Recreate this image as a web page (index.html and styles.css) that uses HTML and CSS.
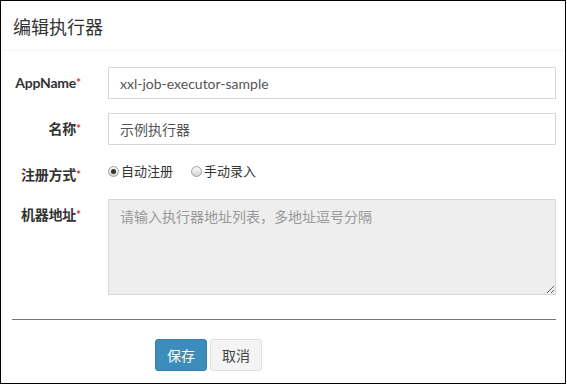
FILE: index.html
```html
<!DOCTYPE html>
<html lang="zh-CN">
<head>
  <meta charset="UTF-8" />
  <title>编辑执行器</title>
  <link rel="stylesheet" href="styles.css">
</head>
<body>
  <div class="modal">
    <div class="modal-header">
      <h4 class="modal-title">编辑执行器</h4>
    </div>
    <form class="modal-body">
      <div class="form-group">
        <label class="control-label">AppName<span class="req">*</span></label>
        <input class="form-control" type="text" value="xxl-job-executor-sample" />
      </div>
      <div class="form-group">
        <label class="control-label">名称<span class="req">*</span></label>
        <input class="form-control" type="text" value="示例执行器" />
      </div>
      <div class="form-group">
        <label class="control-label">注册方式<span class="req">*</span></label>
        <div class="radios">
          <label class="radio-inline"><input type="radio" name="addressType" checked />自动注册</label>
          <label class="radio-inline"><input type="radio" name="addressType" />手动录入</label>
        </div>
      </div>
      <div class="form-group">
        <label class="control-label">机器地址<span class="req">*</span></label>
        <textarea class="form-control area" readonly placeholder="请输入执行器地址列表，多地址逗号分隔"></textarea>
      </div>
      <hr />
      <div class="actions">
        <button type="button" class="btn btn-primary">保存</button>
        <button type="button" class="btn btn-default">取消</button>
      </div>
    </form>
  </div>
</body>
</html>
```

FILE: styles.css
```css
body {
  margin: 0;
  font-family: Lato, "Noto Sans CJK SC", sans-serif;
  font-size: 14px;
  color: #333;
  background: #fff;
}

.modal {
  box-sizing: border-box;
  width: 566px;
  height: 384px;
  border: 1px solid #000;
  background: #fff;
}

.modal-header {
  height: 49px;
  border-bottom: 1px solid #f4f4f4;
  padding-left: 12px;
  display: flex;
  align-items: center;
}

.modal-title {
  margin: 0;
  font-size: 18px;
  font-weight: normal;
  color: #333;
}

.modal-body {
  padding: 16px 9px 0 11px;
}

.form-group {
  display: grid;
  grid-template-columns: 69px 1fr;
  column-gap: 27px;
  align-items: start;
  margin-bottom: 14px;
}

.control-label {
  text-align: right;
  font-weight: bold;
  padding-top: 6px;
  line-height: 20px;
  white-space: nowrap;
  letter-spacing: -0.2px;
}

.req {
  color: #e0302a;
  font-size: 12px;
  font-weight: bold;
  vertical-align: top;
}

.form-control {
  box-sizing: border-box;
  width: 100%;
  height: 32px;
  padding: 6px 11px;
  border: 1px solid #d2d6de;
  font: inherit;
  color: #555;
  outline: none;
}

.area {
  height: 96px;
  background: #eee;
  resize: vertical;
}

.area::placeholder {
  color: #999;
}

.radios {
  display: flex;
  gap: 18px;
  padding-top: 2px;
  line-height: 20px;
  font-size: 13px;
}

.radio-inline {
  display: flex;
  align-items: center;
  gap: 2px;
  color: #333;
}

.radio-inline input {
  appearance: none;
  width: 11px;
  height: 11px;
  margin: 0;
  border: 1px solid #a0a0a0;
  border-radius: 50%;
  background: linear-gradient(#fafafa, #d4d4d4);
  position: relative;
}

.radio-inline input:checked::after {
  content: "";
  position: absolute;
  left: 2px;
  top: 2px;
  width: 5px;
  height: 5px;
  border-radius: 50%;
  background: #333;
}

hr {
  margin: 24px 0 19px;
  border: 0;
  border-top: 1px solid #777;
}

.actions {
  display: flex;
  gap: 3px;
  padding-left: 143px;
}

.btn {
  height: 32px;
  padding: 0 11px;
  border-radius: 3px;
  font: inherit;
  font-size: 14px;
  cursor: pointer;
}

.btn-primary {
  background: #3c8dbc;
  border: 1px solid #367fa9;
  color: #fff;
}

.btn-default {
  background: #f4f4f4;
  border: 1px solid #ddd;
  color: #444;
}
```
